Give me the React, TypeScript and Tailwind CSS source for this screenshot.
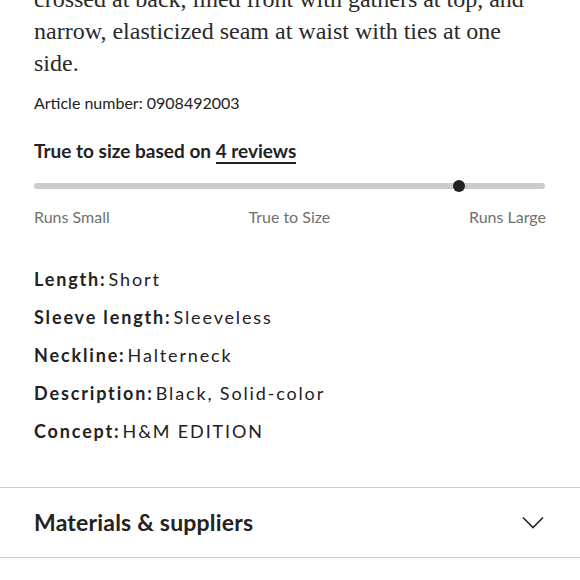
const serif = { fontFamily: '"Liberation Serif", "Times New Roman", serif' };

const specs: [string, string][] = [
  ['Length', 'Short'],
  ['Sleeve length', 'Sleeveless'],
  ['Neckline', 'Halterneck'],
  ['Description', 'Black, Solid-color'],
  ['Concept', 'H&M EDITION'],
];

export default function App() {
  return (
    <div className="w-[580px] h-[580px] overflow-hidden bg-white text-[#222]" style={{ fontFamily: 'Lato, "Open Sans", sans-serif' }}>
      <div className="px-[34px]">
        <p className="mt-[-17px] text-[24px] leading-[32px] text-[#2a2a2a]" style={serif}>
          crossed at back, lined front with gathers at top, and
          <br />
          narrow, elasticized seam at waist with ties at one
          <br />
          side.
        </p>
        <p className="mt-[14px] text-[16px] leading-5">Article number: 0908492003</p>

        <p className="mt-[26px] text-[19px] font-bold leading-6">
          True to size based on{' '}
          <span className="border-b-2 border-[#222]">4 reviews</span>
        </p>

        <div className="relative mt-[20px] h-[6px] w-[511px] rounded-full bg-[#cccccc]">
          <div className="absolute top-1/2 left-[419px] h-[12px] w-[12px] -translate-y-1/2 rounded-full bg-[#222]" />
        </div>
        <div className="mt-[18px] flex w-[512px] justify-between text-[16px] leading-5 text-[#707070]">
          <span>Runs Small</span>
          <span>True to Size</span>
          <span>Runs Large</span>
        </div>

        <dl className="mt-[40px] flex flex-col gap-[14px]">
          {specs.map(([k, v]) => (
            <div key={k} className="flex text-[18px] leading-6 tracking-[1.85px]">
              <dt className="font-bold">{k}:</dt>
              <dd className="ml-[2px]">{v}</dd>
            </div>
          ))}
        </dl>
      </div>

      <div className="mt-[44px] border-t border-b border-[#cccccc]">
        <div className="flex h-[69px] items-center justify-between pl-[34px] pr-[36px]">
          <span className="text-[23px] font-bold tracking-[0.2px]">Materials &amp; suppliers</span>
          <svg width="22" height="13" viewBox="0 0 22 13" fill="none" stroke="#222" strokeWidth="1.6">
            <polyline points="1,1.5 11,11.5 21,1.5" />
          </svg>
        </div>
      </div>
    </div>
  );
}
